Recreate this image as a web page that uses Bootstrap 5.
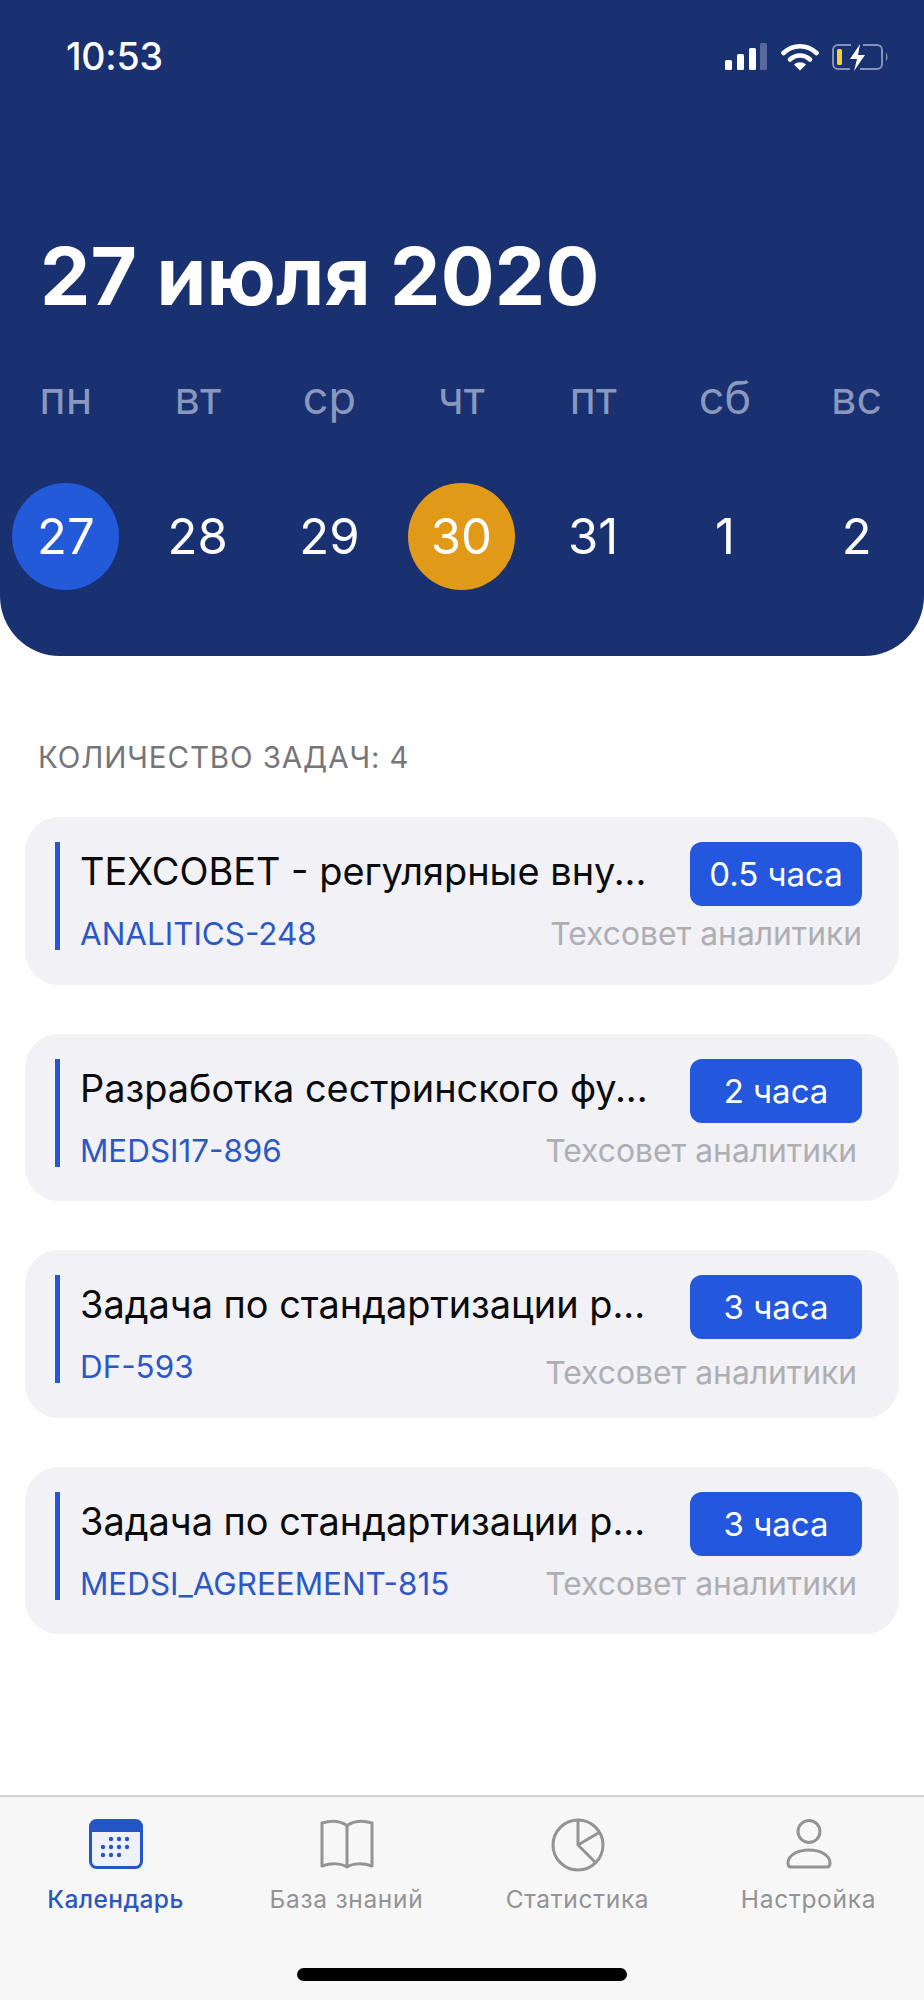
<!DOCTYPE html>
<html lang="ru">

<head>
    <meta charset="UTF-8">
    <meta name="viewport" content="width=device-width, initial-scale=1.0">
    <title>Календарь</title>
    <link rel="stylesheet" href="https://cdn.jsdelivr.net/npm/bootstrap@5.3.3/dist/css/bootstrap.min.css" />
    <style>
        body { font-family: Inter, "Noto Sans", sans-serif; background: #fff; }
        .app-screen { height: 2000px; }
        .top-panel { background: #193071; height: 656px; border-radius: 0 0 60px 60px; color: #fff; }
        .status-row { height: 114px; padding: 0 33px 0 66px; }
        .status-time { font-size: 37.500px; font-weight: 500; line-height: 1; letter-spacing: -.2px; }
        .status-icons { gap: 12px; }
        .date-title { font-size: 80px; font-weight: 700; line-height: 92px; margin: 116px 0 0 40px; letter-spacing: .2px; }
        .day-row > div { flex: 0 0 131.8px; text-align: center; }
        .week-names { color: #8b98bd; font-size: 45px; line-height: 54px; margin-top: 49px; }
        .week-dates { font-size: 49px; line-height: 107px; margin-top: 58px; }
        .day-dot { display: block; width: 107px; height: 107px; margin: 0 auto; border-radius: 50%; }
        .dot-today { background: #235ad9; }
        .dot-event { background: #e09a18; }
        .tasks-count { color: #75757a; font-size: 29.500px; line-height: 36px; margin: 83px 0 42px 38px; letter-spacing: .9px; }
        .task-list { margin: 0 25px; gap: 49px; }
        .task-box { background: #f1f1f6; border-radius: 34px; height: 167.5px; padding: 30px 37px 0 30px; }
        .task-inner { border-left: 5px solid #2556d6; padding-left: 20px; height: 108px; }
        .task-head { margin-top: -5px; height: 64px; }
        .task-title { font-size: 37.900px; line-height: 58px; color: #0b0b0d; white-space: nowrap; }
        .task-hours { background: #2357dd; color: #fff; font-size: 33px; line-height: 64px; width: 172px; border-radius: 12px; text-align: center; }
        .task-meta { font-size: 31.400px; line-height: 40px; margin-top: 8px; }
        .task-code { color: #2c58c6; }
        .task-group { color: #aeaeb3; font-size: 31.800px; }
        .shift-left { margin-right: 5px; }
        .meta-group-low { position: relative; top: 6px; }
        .tab-panel { height: 205px; background: #f7f7f7; border-top: 2px solid #d4d4d6; padding-top: 22px; }
        .tab-item { width: 231px; color: #939395; font-size: 24.500px; line-height: 30px; letter-spacing: .7px; }
        .tab-item svg { display: block; height: 50px; margin: 0 auto 15px; }
        .tab-active { color: #2c58bb; font-weight: 500; letter-spacing: .4px; }
        .tab-item .pie-icon { height: 54px; margin-top: -1px; margin-bottom: 12px; }
        .home-bar { width: 330px; height: 13px; background: #000; border-radius: 7px; margin: 54px auto 0; }
    </style>
</head>

<body>
    <div class="app-screen d-flex flex-column">
        <header class="top-panel">
            <div class="status-row d-flex justify-content-between align-items-center">
                <span class="status-time">10:53</span>
                <div class="status-icons d-flex align-items-center">
                    <svg width="44" height="28" viewBox="0 0 44 28">
                        <rect x="0" y="17" width="7" height="10" rx="1.5" fill="#fff" />
                        <rect x="12" y="11" width="7" height="16" rx="1.5" fill="#fff" />
                        <rect x="24" y="5" width="7" height="22" rx="1.5" fill="#fff" />
                        <rect x="35" y="0" width="7" height="27" rx="1.5" fill="#56689c" />
                    </svg>
                    <svg width="38" height="28" viewBox="0 0 38 28">
                        <path d="M2.5 10C12 1 26 1 35.5 10" fill="none" stroke="#fff" stroke-width="4.6" stroke-linecap="round" />
                        <path d="M9 16.5c6-5.4 14-5.4 20 0" fill="none" stroke="#fff" stroke-width="4.6" stroke-linecap="round" />
                        <path d="M13 21.5c3.5-3 8.500-3 12 0L19 27.500z" fill="#fff" />
                    </svg>
                    <svg width="60" height="28" viewBox="0 0 60 28">
                        <path d="M20 2H7a5 5 0 0 0-5 5v14a5 5 0 0 0 5 5h12M32 2h14a5 5 0 0 1 5 5v14a5 5 0 0 1-5 5H29" fill="none" stroke="#8492b8" stroke-width="2" />
                        <rect x="6" y="6" width="5" height="16" rx="1.500" fill="#f2cf3d" />
                        <path d="M29 1 19 16h7l-3 12 11-16h-7z" fill="#fff" />
                        <path d="M55 10c2 1 2 7 0 8z" fill="#8492b8" />
                    </svg>
                </div>
            </div>
            <h1 class="date-title">27 июля 2020</h1>
            <div class="day-row week-names d-flex">
                <div>пн</div><div>вт</div><div>ср</div><div>чт</div><div>пт</div><div>сб</div><div>вс</div>
            </div>
            <div class="day-row week-dates d-flex">
                <div><span class="day-dot dot-today">27</span></div>
                <div>28</div>
                <div>29</div>
                <div><span class="day-dot dot-event">30</span></div>
                <div>31</div>
                <div>1</div>
                <div>2</div>
            </div>
        </header>

        <div class="tasks-count">КОЛИЧЕСТВО ЗАДАЧ: 4</div>

        <div class="task-list d-flex flex-column">
            <div class="task-box">
                <div class="task-inner">
                    <div class="task-head d-flex justify-content-between">
                        <span class="task-title">ТЕХСОВЕТ - регулярные вну...</span>
                        <span class="task-hours">0.5 часа</span>
                    </div>
                    <div class="task-meta d-flex justify-content-between">
                        <span class="task-code">ANALITICS-248</span>
                        <span class="task-group">Техсовет аналитики</span>
                    </div>
                </div>
            </div>
            <div class="task-box">
                <div class="task-inner">
                    <div class="task-head d-flex justify-content-between">
                        <span class="task-title">Разработка сестринского фу...</span>
                        <span class="task-hours">2 часа</span>
                    </div>
                    <div class="task-meta d-flex justify-content-between">
                        <span class="task-code">MEDSI17-896</span>
                        <span class="task-group shift-left">Техсовет аналитики</span>
                    </div>
                </div>
            </div>
            <div class="task-box">
                <div class="task-inner">
                    <div class="task-head d-flex justify-content-between">
                        <span class="task-title">Задача по стандартизации р...</span>
                        <span class="task-hours">3 часа</span>
                    </div>
                    <div class="task-meta d-flex justify-content-between">
                        <span class="task-code">DF-593</span>
                        <span class="task-group shift-left meta-group-low">Техсовет аналитики</span>
                    </div>
                </div>
            </div>
            <div class="task-box">
                <div class="task-inner">
                    <div class="task-head d-flex justify-content-between">
                        <span class="task-title">Задача по стандартизации р...</span>
                        <span class="task-hours">3 часа</span>
                    </div>
                    <div class="task-meta d-flex justify-content-between">
                        <span class="task-code">MEDSI_AGREEMENT-815</span>
                        <span class="task-group shift-left">Техсовет аналитики</span>
                    </div>
                </div>
            </div>
        </div>

        <footer class="tab-panel mt-auto">
            <div class="d-flex">
                <div class="tab-item tab-active text-center">
                    <svg width="54" height="50" viewBox="0 0 54 50">
                        <rect x="1.500" y="1.500" width="51" height="47" rx="6" fill="#eef1f8" stroke="#2556c8" stroke-width="3" />
                        <path d="M1.500 13V7a6 6 0 0 1 6-6h39a6 6 0 0 1 6 6v6z" fill="#2556c8" />
                        <g fill="#2556c8">
                            <circle cx="22" cy="20" r="2.200" /><circle cx="30" cy="20" r="2.200" /><circle cx="38" cy="20" r="2.200" />
                            <circle cx="14" cy="28" r="2.200" /><circle cx="22" cy="28" r="2.200" /><circle cx="30" cy="28" r="2.200" /><circle cx="38" cy="28" r="2.200" />
                            <circle cx="14" cy="36" r="2.200" /><circle cx="22" cy="36" r="2.200" /><circle cx="30" cy="36" r="2.200" />
                        </g>
                    </svg>
                    Календарь
                </div>
                <div class="tab-item text-center">
                    <svg width="56" height="50" viewBox="0 0 56 50">
                        <path d="M28 7C23 2 13 1 3 4v43c9-3 19-3 25 1 6-4 16-4 25-1V4C43 1 33 2 28 7zM28 7v41" fill="none" stroke="#949496" stroke-width="3" stroke-linejoin="round" />
                    </svg>
                    База знаний
                </div>
                <div class="tab-item text-center">
                    <svg width="54" height="54" viewBox="0 0 54 54" class="pie-icon">
                        <circle cx="27" cy="27" r="25" fill="none" stroke="#949496" stroke-width="3" />
                        <path d="M27 2v25l18 18M27 27l22-13" fill="none" stroke="#949496" stroke-width="3" />
                    </svg>
                    Статистика
                </div>
                <div class="tab-item text-center">
                    <svg width="50" height="50" viewBox="0 0 50 50">
                        <circle cx="25" cy="12.500" r="11" fill="none" stroke="#949496" stroke-width="3" />
                        <path d="M4 44c0-8 10-13 21-13s21 5 21 13c0 2-1 4-3 4H7c-2 0-3-2-3-4z" fill="none" stroke="#949496" stroke-width="3" />
                    </svg>
                    Настройка
                </div>
            </div>
            <div class="home-bar"></div>
        </footer>
    </div>

    <script src="https://cdn.jsdelivr.net/npm/bootstrap@5.3.3/dist/js/bootstrap.bundle.min.js"></script>
</body>

</html>
